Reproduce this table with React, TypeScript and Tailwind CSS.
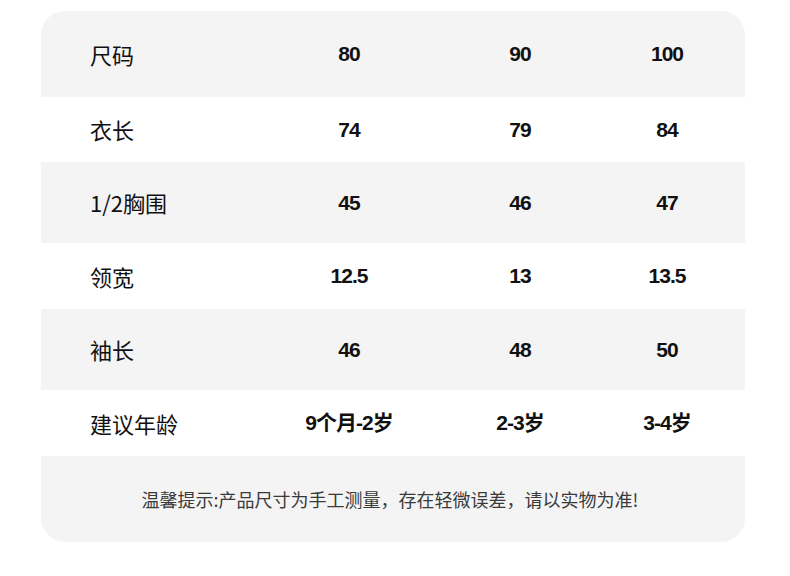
import React from 'react';

const rows = [
  { label: '尺码', values: ['80', '90', '100'], bg: 'bg-[#f4f4f4]', h: 'h-[86px]' },
  { label: '衣长', values: ['74', '79', '84'], bg: 'bg-white', h: 'h-[65px]' },
  { label: '1/2胸围', values: ['45', '46', '47'], bg: 'bg-[#f4f4f4]', h: 'h-[81px]' },
  { label: '领宽', values: ['12.5', '13', '13.5'], bg: 'bg-white', h: 'h-[66px]' },
  { label: '袖长', values: ['46', '48', '50'], bg: 'bg-[#f4f4f4]', h: 'h-[81px]' },
  { label: '建议年龄', values: ['9个月-2岁', '2-3岁', '3-4岁'], bg: 'bg-white', h: 'h-[66px]' },
];

export default function App() {
  return (
    <div className="w-[790px] h-[576px] bg-white pt-[11px] pl-[41px] font-['Liberation_Sans','Noto_Sans_CJK_SC',sans-serif] text-[#111]">
      <div className="w-[704px] rounded-[24px] overflow-hidden">
        {rows.map((row) => (
          <div key={row.label} className={`grid grid-cols-[228px_160px_182px_112px] items-center ${row.bg} ${row.h}`}>
            <span className="pl-[49px] text-[22px] font-['Noto_Sans_CJK_SC',sans-serif]">{row.label}</span>
            {row.values.map((v, i) => (
              <span key={i} className="text-center text-[21px] font-bold tracking-[-1px]">
                {v}
              </span>
            ))}
          </div>
        ))}

        {/* footer note */}
        <div className="h-[86px] bg-[#f4f4f4] flex items-center justify-center pr-[6px]">
          <p className="text-[18px] text-[#3a3a3a] font-['Noto_Sans_CJK_SC',sans-serif]">
            温馨提示:产品尺寸为手工测量，存在轻微误差，请以实物为准!
          </p>
        </div>
      </div>
    </div>
  );
}
